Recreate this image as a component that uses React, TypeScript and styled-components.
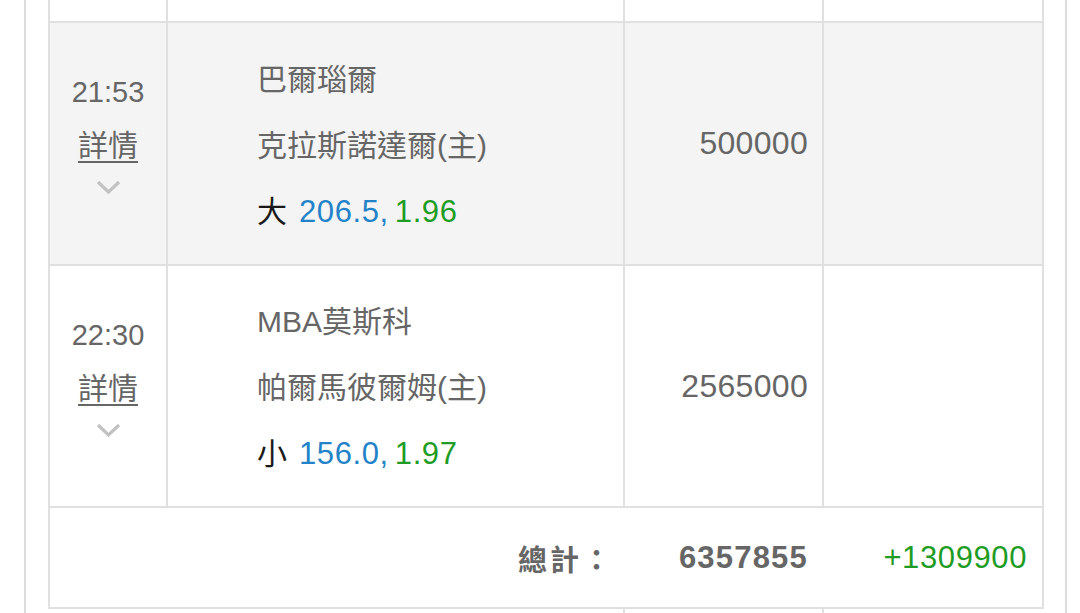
import React from "react";
import styled, { createGlobalStyle } from "styled-components";

const Global = createGlobalStyle`
  html, body { margin: 0; padding: 0; background: #ffffff; }
  body { font-family: "Liberation Sans", "Noto Sans CJK TC", sans-serif; }
`;

const Frame = styled.div`
  margin-left: 24px;
  width: 1043px;
  box-sizing: border-box;
  border-left: 2px solid #dcdcdc;
  border-right: 2px solid #dcdcdc;
  padding: 0 23px 0 22px;
  height: 613px;
  overflow: hidden;
`;

const Table = styled.table`
  width: 994px;
  table-layout: fixed;
  border-collapse: collapse;
  font-family: "Liberation Sans", "Noto Sans CJK TC", sans-serif;
  color: #666666;
`;

const Row = styled.tr<{ $shade?: boolean; $h: number }>`
  background: ${(p) => (p.$shade ? "#f4f4f4" : "#ffffff")};
  height: ${(p) => p.$h}px;
`;

const Cell = styled.td<{ $noTop?: boolean; $open?: "left" | "right" | "both"; $align?: string }>`
  border: 2px solid #e0e0e0;
  ${(p) => (p.$noTop ? "border-top: none;" : "")}
  ${(p) => (p.$open === "left" || p.$open === "both" ? "border-left: none;" : "")}
  ${(p) => (p.$open === "right" || p.$open === "both" ? "border-right: none;" : "")}
  padding: 0;
  vertical-align: middle;
  text-align: ${(p) => p.$align || "left"};
`;

const TailCell = styled.td<{ $line?: boolean }>`
  border: none;
  border-top: 2px solid #e0e0e0;
  ${(p) => (p.$line ? "border-left: 2px solid #e0e0e0;" : "")}
  padding: 0;
`;

const TimeBox = styled.div`
  display: flex;
  flex-direction: column;
  align-items: center;
  padding-bottom: 27px;
`;

const Time = styled.div`
  font-size: 29px;
  line-height: 54px;
  color: #666666;
`;

const Detail = styled.a`
  font-size: 30px;
  line-height: 54px;
  color: #666666;
  text-decoration: underline;
  text-underline-offset: 5px;
  text-decoration-thickness: 2px;
`;

const Chevron = styled.svg`
  margin-top: 7px;
  display: block;
`;

const Match = styled.div`
  padding-left: 89px;
  padding-top: 4px;
  display: flex;
  flex-direction: column;
`;

const Line = styled.div`
  font-size: 30px;
  line-height: 66px;
  white-space: nowrap;
  color: #666666;
`;

const Side = styled.span`
  color: #1a1a1a;
  margin-right: 12px;
`;

const Num = styled.span`
  font-size: 31px;
  letter-spacing: 0.6px;
`;

const Handicap = styled(Num)`
  color: #2483c8;
  margin-right: 6px;
`;

const Odds = styled(Num)`
  color: #1f9c24;
`;

const Amount = styled.div<{ $bold?: boolean }>`
  font-size: ${(p) => (p.$bold ? 31 : 32)}px;
  letter-spacing: ${(p) => (p.$bold ? 1.2 : 0.3)}px;
  padding-right: ${(p) => (p.$bold ? 15 : 14)}px;
  color: #666666;
  font-weight: ${(p) => (p.$bold ? 700 : 400)};
`;

const TotalLabel = styled.div`
  font-size: 29px;
  font-weight: 700;
  letter-spacing: 3px;
  padding-right: 10px;
  color: #666666;
`;

const Profit = styled.div`
  font-size: 31px;
  letter-spacing: 0.6px;
  padding-right: 15px;
  color: #1f9c24;
`;

type Bet = {
  time: string;
  home: string;
  away: string;
  side: string;
  line: string;
  odds: string;
  amount: string;
  shade: boolean;
  h: number;
};

const bets: Bet[] = [
  {
    time: "21:53",
    home: "巴爾瑙爾",
    away: "克拉斯諾達爾(主)",
    side: "大",
    line: "206.5,",
    odds: "1.96",
    amount: "500000",
    shade: true,
    h: 243,
  },
  {
    time: "22:30",
    home: "MBA莫斯科",
    away: "帕爾馬彼爾姆(主)",
    side: "小",
    line: "156.0,",
    odds: "1.97",
    amount: "2565000",
    shade: false,
    h: 242,
  },
];

const Down = () => (
  <Chevron width="25" height="15" viewBox="0 0 25 15">
    <polyline points="2,2 12.5,12 23,2" fill="none" stroke="#c2c2c2" strokeWidth="3.2" />
  </Chevron>
);

export default function App() {
  return (
    <>
      <Global />
      <Frame>
        <Table>
          <colgroup>
            <col style={{ width: 118 }} />
            <col style={{ width: 457 }} />
            <col style={{ width: 199 }} />
            <col style={{ width: 220 }} />
          </colgroup>
          <tbody>
            <Row $h={22}>
              <Cell $noTop />
              <Cell $noTop />
              <Cell $noTop />
              <Cell $noTop />
            </Row>
            {bets.map((b) => (
              <Row key={b.time} $shade={b.shade} $h={b.h}>
                <Cell>
                  <TimeBox>
                    <Time>{b.time}</Time>
                    <Detail>詳情</Detail>
                    <Down />
                  </TimeBox>
                </Cell>
                <Cell>
                  <Match>
                    <Line>{b.home}</Line>
                    <Line>{b.away}</Line>
                    <Line>
                      <Side>{b.side}</Side>
                      <Handicap>{b.line}</Handicap>
                      <Odds>{b.odds}</Odds>
                    </Line>
                  </Match>
                </Cell>
                <Cell $align="right">
                  <Amount>{b.amount}</Amount>
                </Cell>
                <Cell />
              </Row>
            ))}
            <Row $h={101}>
              <Cell colSpan={2} $align="right" $open="right">
                <TotalLabel>總計：</TotalLabel>
              </Cell>
              <Cell $align="right" $open="both">
                <Amount $bold>6357855</Amount>
              </Cell>
              <Cell $align="right" $open="left">
                <Profit>+1309900</Profit>
              </Cell>
            </Row>
            <Row $h={40}>
              <TailCell colSpan={2} />
              <TailCell $line />
              <TailCell $line />
            </Row>
          </tbody>
        </Table>
      </Frame>
    </>
  );
}
